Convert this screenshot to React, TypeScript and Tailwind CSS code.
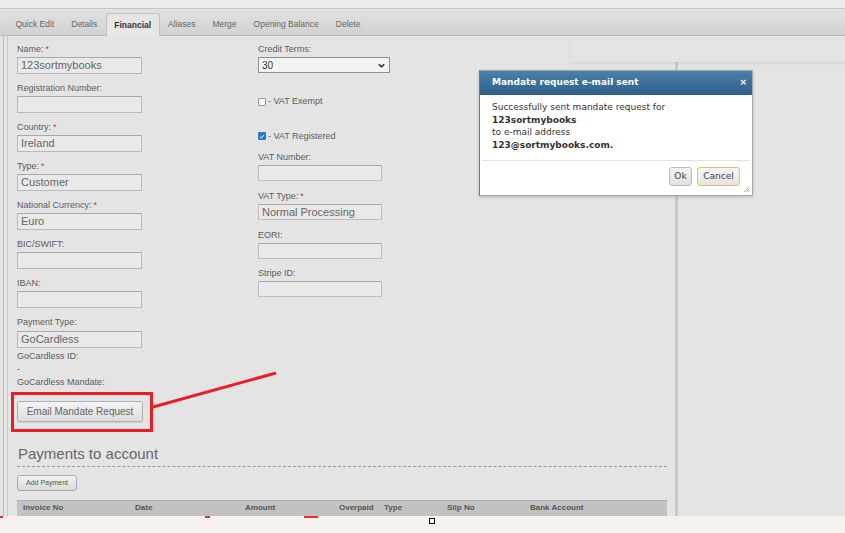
import React from 'react';

const font = { fontFamily: '"Liberation Sans", Arial, sans-serif' };

const TABS = ['Quick Edit', 'Details', 'Financial', 'Aliases', 'Merge', 'Opening Balance', 'Delete'];

const Label: React.FC<{ text: string; required?: boolean }> = ({ text, required }) => (
  <div className="h-[10px] text-[9px] leading-[10px] text-[#5c5c5c]">
    {text}
    {required && <span className="ml-[2px] text-[#d33]">*</span>}
  </div>
);

const Field: React.FC<{ label: string; value?: string; required?: boolean }> = ({ label, value, required }) => (
  <div className="mb-[9px]">
    <Label text={label} required={required} />
    <div className="mt-[3px] flex h-[17px] w-[125px] items-center border border-[#b9b9b9] border-t-[#a9a9a9] bg-[#e9e9e9] pl-[3px] text-[11px] text-[#666]">
      {value}
    </div>
  </div>
);

const RightInput: React.FC<{ value?: string }> = ({ value }) => (
  <div className="mt-[3px] flex h-[16px] w-[124px] items-center border border-[#bdbdbd] border-t-[#aaa] bg-[#e9e9e9] pl-[3px] text-[11px] text-[#666]">
    {value}
  </div>
);

const Checkbox: React.FC<{ checked?: boolean; label: string }> = ({ checked, label }) => (
  <div className="flex items-center gap-[2px] text-[9px] text-[#5c5c5c]">
    <span
      className={`flex h-[8px] w-[8px] items-center justify-center rounded-[1px] border ${
        checked ? 'border-[#2f76c9] bg-[#2f76c9]' : 'border-[#999] bg-[#f4f4f4]'
      }`}
    >
      {checked && (
        <svg viewBox="0 0 8 8" className="h-[7px] w-[7px]">
          <path d="M1.3 4.2 L3.2 6 L6.8 1.8" stroke="white" strokeWidth="1.3" fill="none" />
        </svg>
      )}
    </span>
    <span>- {label}</span>
  </div>
);

export default function App() {
  return (
    <div className="relative h-[533px] w-[845px] overflow-hidden bg-[#e4e4e4]" style={font}>
      <div className="flex h-full flex-col">
        {/* top strip */}
        <div className="h-[9px] border-b border-[#c4c4c4] bg-[#ebebeb]" />

        {/* tab bar */}
        <div className="flex h-[27px] items-end border-b border-[#b9b9b9] bg-gradient-to-b from-[#e2e2e2] to-[#d2d2d2] pl-[7px]">
          {TABS.map(t =>
            t === 'Financial' ? (
              <div
                key={t}
                className="relative top-[1px] flex h-[23px] items-center rounded-t-[3px] border border-b-0 border-[#c2c2c2] bg-[#e6e6e6] px-[7.5px] text-[8.5px] font-bold text-[#333]"
              >
                {t}
              </div>
            ) : (
              <div key={t} className="flex h-[22px] items-center px-[8.5px] text-[8.5px] text-[#666]">
                {t}
              </div>
            )
          )}
        </div>

        {/* main */}
        <div className="flex flex-1 overflow-hidden">
          <div className="flex w-[10px] gap-[3px] pl-[3px]">
            <div className="w-[1px] bg-[#bdbdbd]" />
            <div className="w-[1px] bg-[#c9c9c9]" />
          </div>

          <div className="w-[665px] pl-[7px] pr-[8px] pt-[8px]">
            <div className="flex">
              {/* left column */}
              <div className="w-[241px]">
                <Field label="Name:" required value="123sortmybooks" />
                <Field label="Registration Number:" />
                <Field label="Country:" required value="Ireland" />
                <Field label="Type:" required value="Customer" />
                <Field label="National Currency:" required value="Euro" />
                <Field label="BIC/SWIFT:" />
                <Field label="IBAN:" />
                <div className="mb-[1px]">
                  <Label text="Payment Type:" />
                  <div className="mt-[4px] flex h-[17px] w-[125px] items-center border border-[#b9b9b9] border-t-[#a9a9a9] bg-[#e9e9e9] pl-[3px] text-[11px] text-[#666]">
                    GoCardless
                  </div>
                </div>
                <div className="mt-[2px] text-[9px] leading-[13px] text-[#5c5c5c]">
                  <div>GoCardless ID:</div>
                  <div>-</div>
                  <div>GoCardless Mandate:</div>
                </div>
                <button className="mt-[12px] h-[21px] w-[126px] rounded-[3px] border border-[#b0b0b0] bg-gradient-to-b from-[#f4f4f4] to-[#dcdcdc] text-[10px] text-[#666] shadow-[0_1px_1px_rgba(0,0,0,0.1)]">
                  Email Mandate Request
                </button>
              </div>

              {/* right column */}
              <div className="w-[200px]">
                <Label text="Credit Terms:" />
                <div className="mt-[3px] flex h-[16px] w-[132px] items-center justify-between border border-[#8f8f8f] bg-[#f3f3f3] px-[3px] text-[10px] text-[#333]">
                  <span>30</span>
                  <svg viewBox="0 0 10 10" className="h-[9px] w-[9px]">
                    <path d="M2 3.5 L5 6.5 L8 3.5" stroke="#222" strokeWidth="1.6" fill="none" />
                  </svg>
                </div>
                <div className="mt-[22px]">
                  <Checkbox label="VAT Exempt" />
                </div>
                <div className="mt-[21px]">
                  <Checkbox checked label="VAT Registered" />
                </div>
                <div className="mt-[9px]">
                  <Label text="VAT Number:" />
                  <RightInput />
                </div>
                <div className="mt-[10px]">
                  <Label text="VAT Type:" required />
                  <RightInput value="Normal Processing" />
                </div>
                <div className="mt-[10px]">
                  <Label text="EORI:" />
                  <RightInput />
                </div>
                <div className="mt-[9px]">
                  <Label text="Stripe ID:" />
                  <RightInput />
                </div>
              </div>
            </div>

            {/* payments */}
            <div className="mt-[23px] pl-[1px] text-[15px] leading-[18px] text-[#666]">Payments to account</div>
            <div className="mt-[3px] border-b border-dashed border-[#9a9a9a]" />
            <button className="mt-[8px] h-[16px] w-[60px] rounded-[3px] border border-[#aaa] bg-gradient-to-b from-[#f2f2f2] to-[#dadada] text-[7px] text-[#555]">
              Add Payment
            </button>
            <div className="mt-[8px] flex h-[16px] items-center border-t border-[#b0b0b0] bg-[#c2c2c2] text-[8px] font-bold text-[#555]">
              <span className="w-[118px] pl-[6px]">Invoice No</span>
              <span className="w-[110px]">Date</span>
              <span className="w-[94px]">Amount</span>
              <span className="w-[45px]">Overpaid</span>
              <span className="w-[63px]">Type</span>
              <span className="w-[83px]">Slip No</span>
              <span>Bank Account</span>
            </div>
          </div>

          <div className="mt-[26px] w-[3px] bg-[#c8c8c8]" />
          <div className="flex-1" />
        </div>

        {/* bottom strip */}
        <div className="relative h-[17px] bg-[#f6f1ee]">
          <span className="absolute left-0 top-0 h-[2px] w-[3px] bg-[#e03030]" />
          <span className="absolute left-[205px] top-0 h-[2px] w-[5px] bg-[#e03030]" />
          <span className="absolute left-[304px] top-0 h-[2px] w-[14px] bg-[#e03030]" />
          <span className="absolute left-[429px] top-[2px] h-[6px] w-[6px] border border-black bg-white" />
        </div>
      </div>

      {/* shadow under tab area on right */}
      <div className="absolute left-[570px] top-[36px] h-[26px] w-[275px] shadow-[0_2px_2px_rgba(0,0,0,0.06)]" />

      {/* red annotation */}
      <div className="absolute left-[11px] top-[392px] h-[40px] w-[142px] border-[3px] border-[#ec1c24]" />
      <svg className="absolute left-0 top-0" width="845" height="533" style={{ pointerEvents: 'none' }}>
        <line x1="153" y1="407" x2="276" y2="373" stroke="#ec1c24" strokeWidth="3" />
      </svg>

      {/* dialog */}
      <div className="absolute left-[479px] top-[70px] flex h-[126px] w-[274px] flex-col border border-[#a8a8a8] border-l-[#777] bg-white shadow-[0_1px_3px_rgba(0,0,0,0.2)]" style={{ fontFamily: '"DejaVu Sans", Verdana, sans-serif' }}>
        <div className="flex h-[24px] items-center justify-between bg-gradient-to-b from-[#4b81ad] to-[#2e5e86] pl-[12px] pr-[5px] text-[9px] font-bold text-white">
          <span>Mandate request e-mail sent</span>
          <span className="text-[9px]">×</span>
        </div>
        <div className="px-[12px] pt-[6px] text-[9px] leading-[12.5px] text-[#333]">
          <div>Successfully sent mandate request for</div>
          <div className="font-bold">123sortmybooks</div>
          <div>to e-mail address</div>
          <div className="font-bold">123@sortmybooks.com.</div>
        </div>
        <div className="mx-[2px] mt-[9px] border-t border-[#e2e2e2]" />
        <div className="relative flex flex-1 items-start justify-end gap-[5px] pr-[12px] pt-[6px]">
          <button className="h-[19px] w-[23px] rounded-[3px] border border-[#bbb] bg-gradient-to-b from-[#f5f5f5] to-[#e0e0e0] text-[9px] text-[#444]">
            Ok
          </button>
          <button className="h-[19px] w-[43px] rounded-[3px] border border-[#e0c260] bg-gradient-to-b from-[#f7f7f7] to-[#e4e4e4] text-[9px] text-[#444]">
            Cancel
          </button>
          <svg viewBox="0 0 8 8" className="absolute bottom-[2px] right-[2px] h-[7px] w-[7px]">
            <path d="M7 1 L1 7 M7 3.5 L3.5 7 M7 6 L6 7" stroke="#999" strokeWidth="1" />
          </svg>
        </div>
      </div>
    </div>
  );
}
